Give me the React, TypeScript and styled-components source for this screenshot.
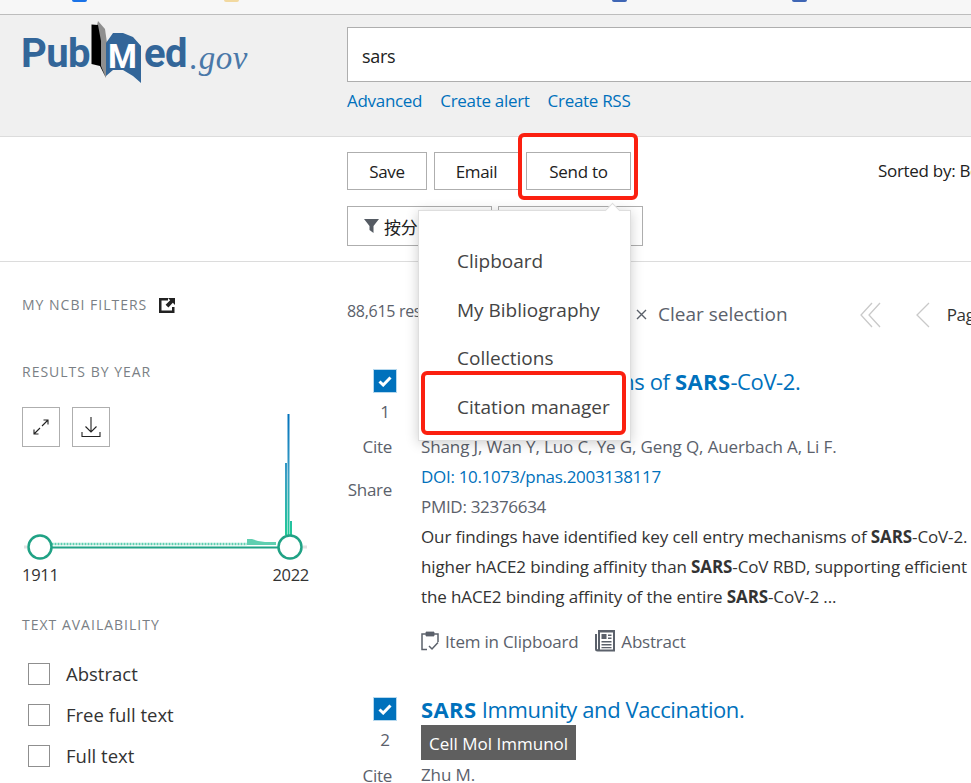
import { createGlobalStyle, styled } from "styled-components";

const GlobalStyle = createGlobalStyle`
  html, body {
    margin: 0;
    padding: 0;
    background: #fff;
  }
  body {
    font-family: "Open Sans", "Noto Sans CJK SC", sans-serif;
    color: #212121;
  }
`;

const Page = styled.div`
  position: relative;
  width: 971px;
  height: 783px;
  overflow: hidden;
  background: #fff;
  font-size: 17px;
  letter-spacing: -0.3px;
`;

const BookmarkBar = styled.div`
  display: flex;
  height: 14px;
  background: #f7f7f7;
  border-bottom: 1px solid #bdbdbd;
  overflow: hidden;
`;

const BookmarkIcon = styled.span<{ $left: number; $color: string }>`
  width: 15px;
  height: 2px;
  margin-left: ${({ $left }) => $left}px;
  background: ${({ $color }) => $color};
  border-radius: 0 0 6px 6px;
  flex-shrink: 0;
`;

const Header = styled.header`
  display: flex;
  height: 121px;
  background: #f0f0f0;
  border-bottom: 1px solid #dcdcdc;
`;

const Logo = styled.div`
  display: flex;
  align-items: flex-start;
  width: 347px;
  padding: 5px 0 0 21px;
  box-sizing: border-box;
  flex-shrink: 0;
  color: #336699;
`;

const LogoWord = styled.span`
  font-family: Roboto, "Liberation Sans", sans-serif;
  font-weight: 700;
  font-size: 40px;
  line-height: 44px;
  letter-spacing: -0.6px;
  margin-top: 12px;
`;

const LogoGov = styled.span`
  font-family: "Liberation Serif", serif;
  font-style: italic;
  font-size: 33px;
  line-height: 44px;
  letter-spacing: 0.6px;
  color: #4a78a8;
  margin: 16px 0 0 3px;
`;

const SearchArea = styled.div`
  flex: 1;
  padding-top: 12px;
  min-width: 0;
`;

const SearchBox = styled.div`
  width: 700px;
  height: 55px;
  box-sizing: border-box;
  background: #fff;
  border: 1px solid #aeaeae;
  padding-left: 14px;
  font-size: 18px;
  line-height: 56px;
`;

const SearchLinks = styled.div`
  display: flex;
  gap: 18px;
  margin-top: 7px;
  line-height: 24px;
`;

const Link = styled.a`
  color: #0071bc;
  text-decoration: none;
  white-space: nowrap;
`;

const Toolbar = styled.section`
  height: 125px;
  padding: 15px 0 0 347px;
  box-sizing: border-box;
  border-bottom: 1px solid #dcdcdc;
`;

const ToolRow = styled.div<{ $gap: number }>`
  display: flex;
  gap: ${({ $gap }) => $gap}px;
  margin-bottom: 16px;
`;

const ToolButton = styled.button<{ $width: number; $height: number; $start?: boolean }>`
  display: flex;
  align-items: center;
  justify-content: ${({ $start }) => ($start ? "flex-start" : "center")};
  gap: 5px;
  flex-shrink: 0;
  width: ${({ $width }) => $width}px;
  height: ${({ $height }) => $height}px;
  padding: 0 0 0 ${({ $start }) => ($start ? 16 : 0)}px;
  background: #fff;
  border: 1px solid #aeaeae;
  font: inherit;
  letter-spacing: inherit;
  color: #212121;
`;

const SortLabel = styled.span`
  margin-left: 240px;
  line-height: 38px;
  white-space: nowrap;
`;

const Main = styled.main`
  display: grid;
  grid-template-columns: 347px 1fr;
`;

const Sidebar = styled.aside`
  padding: 33px 0 0 22px;
`;

const SideTitle = styled.h3<{ $top?: number }>`
  display: flex;
  align-items: center;
  gap: 12px;
  margin: ${({ $top }) => $top ?? 0}px 0 0;
  font-size: 14px;
  font-weight: 400;
  line-height: 20px;
  letter-spacing: 1px;
  text-transform: uppercase;
  color: #7a7f85;
`;

const ChartStack = styled.div`
  display: grid;
  margin-top: 25px;
  width: 290px;
  & > * {
    grid-area: 1 / 1;
  }
`;

const ChartButtons = styled.div`
  display: flex;
  align-items: flex-start;
  gap: 12px;
`;

const ChartButton = styled.div`
  display: flex;
  align-items: center;
  justify-content: center;
  width: 38px;
  height: 40px;
  box-sizing: border-box;
  border: 1px solid #aeaeae;
`;

const YearRow = styled.div`
  display: flex;
  justify-content: space-between;
  width: 287px;
  margin-top: 5px;
  font-size: 16.500px;
  line-height: 20px;
  color: #333;
`;

const FilterRow = styled.label`
  display: flex;
  align-items: center;
  gap: 16px;
  height: 41px;
  padding-left: 6px;
  font-size: 18.500px;
  letter-spacing: 0;
  color: #333;
`;

const FilterList = styled.div`
  margin-top: 18px;
`;

const Box = styled.span`
  width: 22px;
  height: 22px;
  box-sizing: border-box;
  background: #fff;
  border: 1px solid #8f8f8f;
`;

const Results = styled.div`
  padding-top: 40px;
  min-width: 0;
`;

const Summary = styled.div`
  display: flex;
  align-items: center;
  height: 24px;
  margin-bottom: 41px;
  color: #5b616b;
  white-space: nowrap;
  & > * {
    flex-shrink: 0;
  }
`;

const Count = styled.span`
  width: 289px;
  font-size: 16px;
  margin-top: -6px;
`;

const ClearText = styled.span`
  margin-left: 11px;
  font-size: 19px;
  letter-spacing: 0;
`;

const PagerIcons = styled.span`
  display: flex;
  align-items: center;
  gap: 32px;
  margin-left: 71px;
  margin-top: 2px;
`;

const PagerLabel = styled.span`
  margin-left: 17px;
  color: #333;
`;

const Result = styled.article`
  display: grid;
  grid-template-columns: 74px 1fr;
  margin-bottom: 39px;
`;

const Gutter = styled.div`
  display: flex;
  flex-direction: column;
  padding-top: 3px;
  color: #5b616b;
`;

const Tick = styled.span`
  display: flex;
  align-items: center;
  justify-content: center;
  width: 22px;
  height: 22px;
  margin-left: 27px;
  background: #0071bc;
  outline: 1px solid #b5d8ee;
`;

const Rank = styled.span`
  width: 22px;
  margin: 8px 0 0 27px;
  line-height: 24px;
  text-align: center;
`;

const GutterAction = styled.span<{ $top: number }>`
  width: 45px;
  margin-top: ${({ $top }) => $top}px;
  line-height: 24px;
  text-align: right;
`;

const Title = styled.h2`
  height: 30px;
  margin: 0;
  font-size: 22px;
  font-weight: 400;
  line-height: 28px;
  letter-spacing: -0.4px;
  color: #0071bc;
  white-space: nowrap;
  b {
    font-weight: 700;
    letter-spacing: 0.4px;
  }
`;

const Journal = styled.span`
  display: block;
  width: fit-content;
  height: 35px;
  padding: 0 8px;
  background: #5f5f5f;
  color: #fff;
  font-size: 17px;
  letter-spacing: 0;
  line-height: 37px;
  white-space: nowrap;
`;

const Line = styled.div<{ $tone?: string }>`
  height: 30px;
  line-height: 30px;
  color: ${({ $tone }) => $tone ?? "#5b616b"};
  white-space: nowrap;
  b {
    font-weight: 700;
  }
`;

const Authors = styled(Line)`
  letter-spacing: -0.12px;
`;

const Abstract = styled(Line)`
  letter-spacing: -0.12px;
`;

const ItemActions = styled.div`
  display: flex;
  align-items: center;
  height: 30px;
  margin-top: 14px;
  letter-spacing: -0.2px;
  color: #5b616b;
`;

const ItemAction = styled.span<{ $gap: number }>`
  display: flex;
  align-items: center;
  gap: 6px;
  margin-right: ${({ $gap }) => $gap}px;
  white-space: nowrap;
`;

const Menu = styled.div`
  position: absolute;
  left: 418px;
  top: 210px;
  width: 213px;
  height: 231px;
  box-sizing: border-box;
  padding-top: 26px;
  background: #fff;
  border: 1px solid #dedede;
  box-shadow: 0 2px 12px rgba(0, 0, 0, 0.2);
  font-size: 19px;
  letter-spacing: 0;
  color: #444;
  &::before {
    content: "";
    position: absolute;
    right: 12px;
    top: -6px;
    width: 10px;
    height: 10px;
    background: #fff;
    border-left: 1px solid #dedede;
    border-top: 1px solid #dedede;
    transform: rotate(45deg);
  }
`;

const MenuItem = styled.div`
  height: 48.700px;
  padding-left: 38px;
  line-height: 48px;
  white-space: nowrap;
`;

const RedMark = styled.div<{ $left: number; $top: number; $width: number; $height: number }>`
  position: absolute;
  left: ${({ $left }) => $left}px;
  top: ${({ $top }) => $top}px;
  width: ${({ $width }) => $width}px;
  height: ${({ $height }) => $height}px;
  box-sizing: border-box;
  border: 4px solid #fb2010;
  border-radius: 6px;
`;

const Expand = () => (
  <svg width="20" height="20" viewBox="0 0 20 20" fill="none" stroke="#222" strokeWidth="1.100">
    <path d="M3 17 9 11M3 12.500V17H7.500M17 3 11 9M12.500 3H17V7.500" />
  </svg>
);

const Download = () => (
  <svg width="20" height="22" viewBox="0 0 20 22" fill="none" stroke="#222" strokeWidth="1.100">
    <path d="M10 1V16M4.500 10.500 10 16l5.500-5.500M1 16v4.500h18V16" />
  </svg>
);

const ExternalIcon = () => (
  <svg width="16" height="15" viewBox="0 0 16 15">
    <path fill="#222" d="M0 0h9v2.500H2.500v10H13V9h2.500v6H0z" />
    <path fill="#222" d="M9 0h7v7l-2.200-2.200L9.400 9.600 6.600 6.800 11.200 2.200z" />
  </svg>
);

const FilterIcon = () => (
  <svg width="15" height="14" viewBox="0 0 15 14">
    <path fill="#555b63" d="M0 0H15L9.500 7V14L5.500 11V7z" />
  </svg>
);

const CheckMark = () => (
  <svg width="14" height="11" viewBox="0 0 14 11" fill="none" stroke="#fff" strokeWidth="3">
    <path d="M1.500 5.500 5.200 9 12.500 1.500" />
  </svg>
);

const Close = () => (
  <svg width="11" height="11" viewBox="0 0 11 11" stroke="#5b616b" strokeWidth="1.400">
    <path d="M1 1 10 10M10 1 1 10" />
  </svg>
);

const First = () => (
  <svg width="24" height="26" viewBox="0 0 24 26" fill="none" stroke="#c9c9c9" strokeWidth="1.300">
    <path d="M13 1 2 13l11 12M21 1 10 13l11 12" />
  </svg>
);

const Prev = () => (
  <svg width="15" height="26" viewBox="0 0 15 26" fill="none" stroke="#c9c9c9" strokeWidth="1.300">
    <path d="M14 1 2 13l12 12" />
  </svg>
);

const ClipboardIcon = () => (
  <svg width="18" height="20" viewBox="0 0 18 20" fill="none" stroke="#5b616b" strokeWidth="1.500">
    <path d="M5 3H1v15.500h5M13 3h4v8" />
    <path d="M5 1h8v4H5z" fill="#5b616b" strokeWidth="0.800" />
    <path d="M8 15l3 3 6-6.500" />
  </svg>
);

const NewsIcon = () => (
  <svg width="20" height="23" viewBox="0 0 20 23">
    <path fill="#5b616b" fillRule="evenodd" d="M3 0H20V21.500H2.500A2.500 2.500 0 0 1 0 19V4H2V19a.7.7 0 0 0 1 0zM5 2.500V19.500H18V2.500zM6.500 4H11.500V9H6.500zM13 4.500H16.500V6H13zM13 7.500H16.500V9H13zM6.500 11H16.500V12.500H6.500zM6.500 14H16.500V15.500H6.500zM6.500 17H16.500V18.200H6.500z" />
  </svg>
);

const BookMark = () => (
  <svg width="54" height="64" viewBox="90 19 54 64">
    <path fill="#8f8f8f" d="M98 20 105 28 107 42 106 77 100 64 97 24z" />
    <path fill="#000" d="M91.500 23.500 98 24 101 40V65L106 77 100 65 91.500 63z" />
    <path fill="#336699" d="M106 42 113 32H123L133 36 141 45V82L133 75 123 69H113L106 75z" />
    <text x="108" y="67" fontFamily="Roboto, sans-serif" fontWeight="700" fontSize="33" fill="#fff">M</text>
  </svg>
);

const YearChart = () => (
  <svg width="290" height="153" viewBox="22 407 290 153">
    <defs>
      <linearGradient id="bars" gradientUnits="userSpaceOnUse" x1="0" y1="414" x2="0" y2="535">
        <stop offset="0" stopColor="#0071bc" />
        <stop offset="0.500" stopColor="#3b9fc4" />
        <stop offset="1" stopColor="#20c997" />
      </linearGradient>
    </defs>
    <path stroke="#e2e2e2" strokeWidth="3" d="M24 547h3M303 547h4" />
    <path stroke="#20a285" strokeWidth="2" d="M52 547.500H278" />
    <path stroke="#5fcfb0" strokeWidth="2.500" strokeDasharray="1 0.500" d="M52 544H247" />
    <path fill="#5fcfb0" d="M247 545V539L252 539 258 541 265 542 276 542V545z" />
    <path fill="url(#bars)" d="M285 463H287V535H285zM287.500 414H289.500V535H287.500zM290 521H292V535H290z" />
    <circle cx="40" cy="547" r="11.500" fill="#fff" stroke="#20a285" strokeWidth="2.500" />
    <circle cx="290" cy="547" r="11.500" fill="#fff" stroke="#20a285" strokeWidth="2.500" />
  </svg>
);

export default function App() {
  return (
    <Page>
      <GlobalStyle />
      <BookmarkBar>
        <BookmarkIcon $left={72} $color="#1a73e8" />
        <BookmarkIcon $left={137} $color="#f2d9a0" />
        <BookmarkIcon $left={373} $color="#3f66b5" />
        <BookmarkIcon $left={165} $color="#3f66b5" />
      </BookmarkBar>
      <Header>
        <Logo>
          <LogoWord>Pub</LogoWord>
          <BookMark />
          <LogoWord>ed</LogoWord>
          <LogoGov>.gov</LogoGov>
        </Logo>
        <SearchArea>
          <SearchBox>sars</SearchBox>
          <SearchLinks>
            <Link>Advanced</Link>
            <Link>Create alert</Link>
            <Link>Create RSS</Link>
          </SearchLinks>
        </SearchArea>
      </Header>
      <Toolbar>
        <ToolRow $gap={7}>
          <ToolButton $width={80} $height={38}>Save</ToolButton>
          <ToolButton $width={85} $height={38}>Email</ToolButton>
          <ToolButton $width={105} $height={38}>Send to</ToolButton>
          <SortLabel>Sorted by: Best match</SortLabel>
        </ToolRow>
        <ToolRow $gap={6}>
          <ToolButton $width={145} $height={40} $start>
            <FilterIcon />
            按分类
          </ToolButton>
          <ToolButton $width={145} $height={40} />
        </ToolRow>
      </Toolbar>
      <Main>
        <Sidebar>
          <SideTitle>
            My NCBI Filters
            <ExternalIcon />
          </SideTitle>
          <SideTitle $top={47}>Results by Year</SideTitle>
          <ChartStack>
            <YearChart />
            <ChartButtons>
              <ChartButton>
                <Expand />
              </ChartButton>
              <ChartButton>
                <Download />
              </ChartButton>
            </ChartButtons>
          </ChartStack>
          <YearRow>
            <span>1911</span>
            <span>2022</span>
          </YearRow>
          <SideTitle $top={30}>Text Availability</SideTitle>
          <FilterList>
            {["Abstract", "Free full text", "Full text"].map((label) => (
              <FilterRow key={label}>
                <Box />
                {label}
              </FilterRow>
            ))}
          </FilterList>
        </Sidebar>
        <Results>
          <Summary>
            <Count>88,615 results</Count>
            <Close />
            <ClearText>Clear selection</ClearText>
            <PagerIcons>
              <First />
              <Prev />
            </PagerIcons>
            <PagerLabel>Page</PagerLabel>
          </Summary>
          <Result>
            <Gutter>
              <Tick>
                <CheckMark />
              </Tick>
              <Rank>1</Rank>
              <GutterAction $top={11}>Cite</GutterAction>
              <GutterAction $top={19}>Share</GutterAction>
            </Gutter>
            <div>
              <Title>
                Cell entry mechanisms of <b>SARS</b>-CoV-2.
              </Title>
              <Journal>Proc Natl Acad Sci U S A</Journal>
              <Authors>Shang J, Wan Y, Luo C, Ye G, Geng Q, Auerbach A, Li F.</Authors>
              <Line>
                <Link>DOI: 10.1073/pnas.2003138117</Link>
              </Line>
              <Line>PMID: 32376634</Line>
              <Abstract $tone="#333">
                Our findings have identified key cell entry mechanisms of <b>SARS</b>-CoV-2.
              </Abstract>
              <Abstract $tone="#333">
                higher hACE2 binding affinity than <b>SARS</b>-CoV RBD, supporting efficient
              </Abstract>
              <Abstract $tone="#333">
                the hACE2 binding affinity of the entire <b>SARS</b>-CoV-2 ...
              </Abstract>
              <ItemActions>
                <ItemAction $gap={17}>
                  <ClipboardIcon />
                  Item in Clipboard
                </ItemAction>
                <ItemAction $gap={0}>
                  <NewsIcon />
                  Abstract
                </ItemAction>
              </ItemActions>
            </div>
          </Result>
          <Result>
            <Gutter>
              <Tick>
                <CheckMark />
              </Tick>
              <Rank>2</Rank>
              <GutterAction $top={12}>Cite</GutterAction>
            </Gutter>
            <div>
              <Title>
                <b>SARS</b> Immunity and Vaccination.
              </Title>
              <Journal>Cell Mol Immunol</Journal>
              <Authors>Zhu M.</Authors>
            </div>
          </Result>
        </Results>
      </Main>
      <Menu>
        <MenuItem>Clipboard</MenuItem>
        <MenuItem>My Bibliography</MenuItem>
        <MenuItem>Collections</MenuItem>
        <MenuItem>Citation manager</MenuItem>
      </Menu>
      <RedMark $left={518} $top={133} $width={120} $height={67} />
      <RedMark $left={421} $top={371} $width={205} $height={64} />
    </Page>
  );
}
